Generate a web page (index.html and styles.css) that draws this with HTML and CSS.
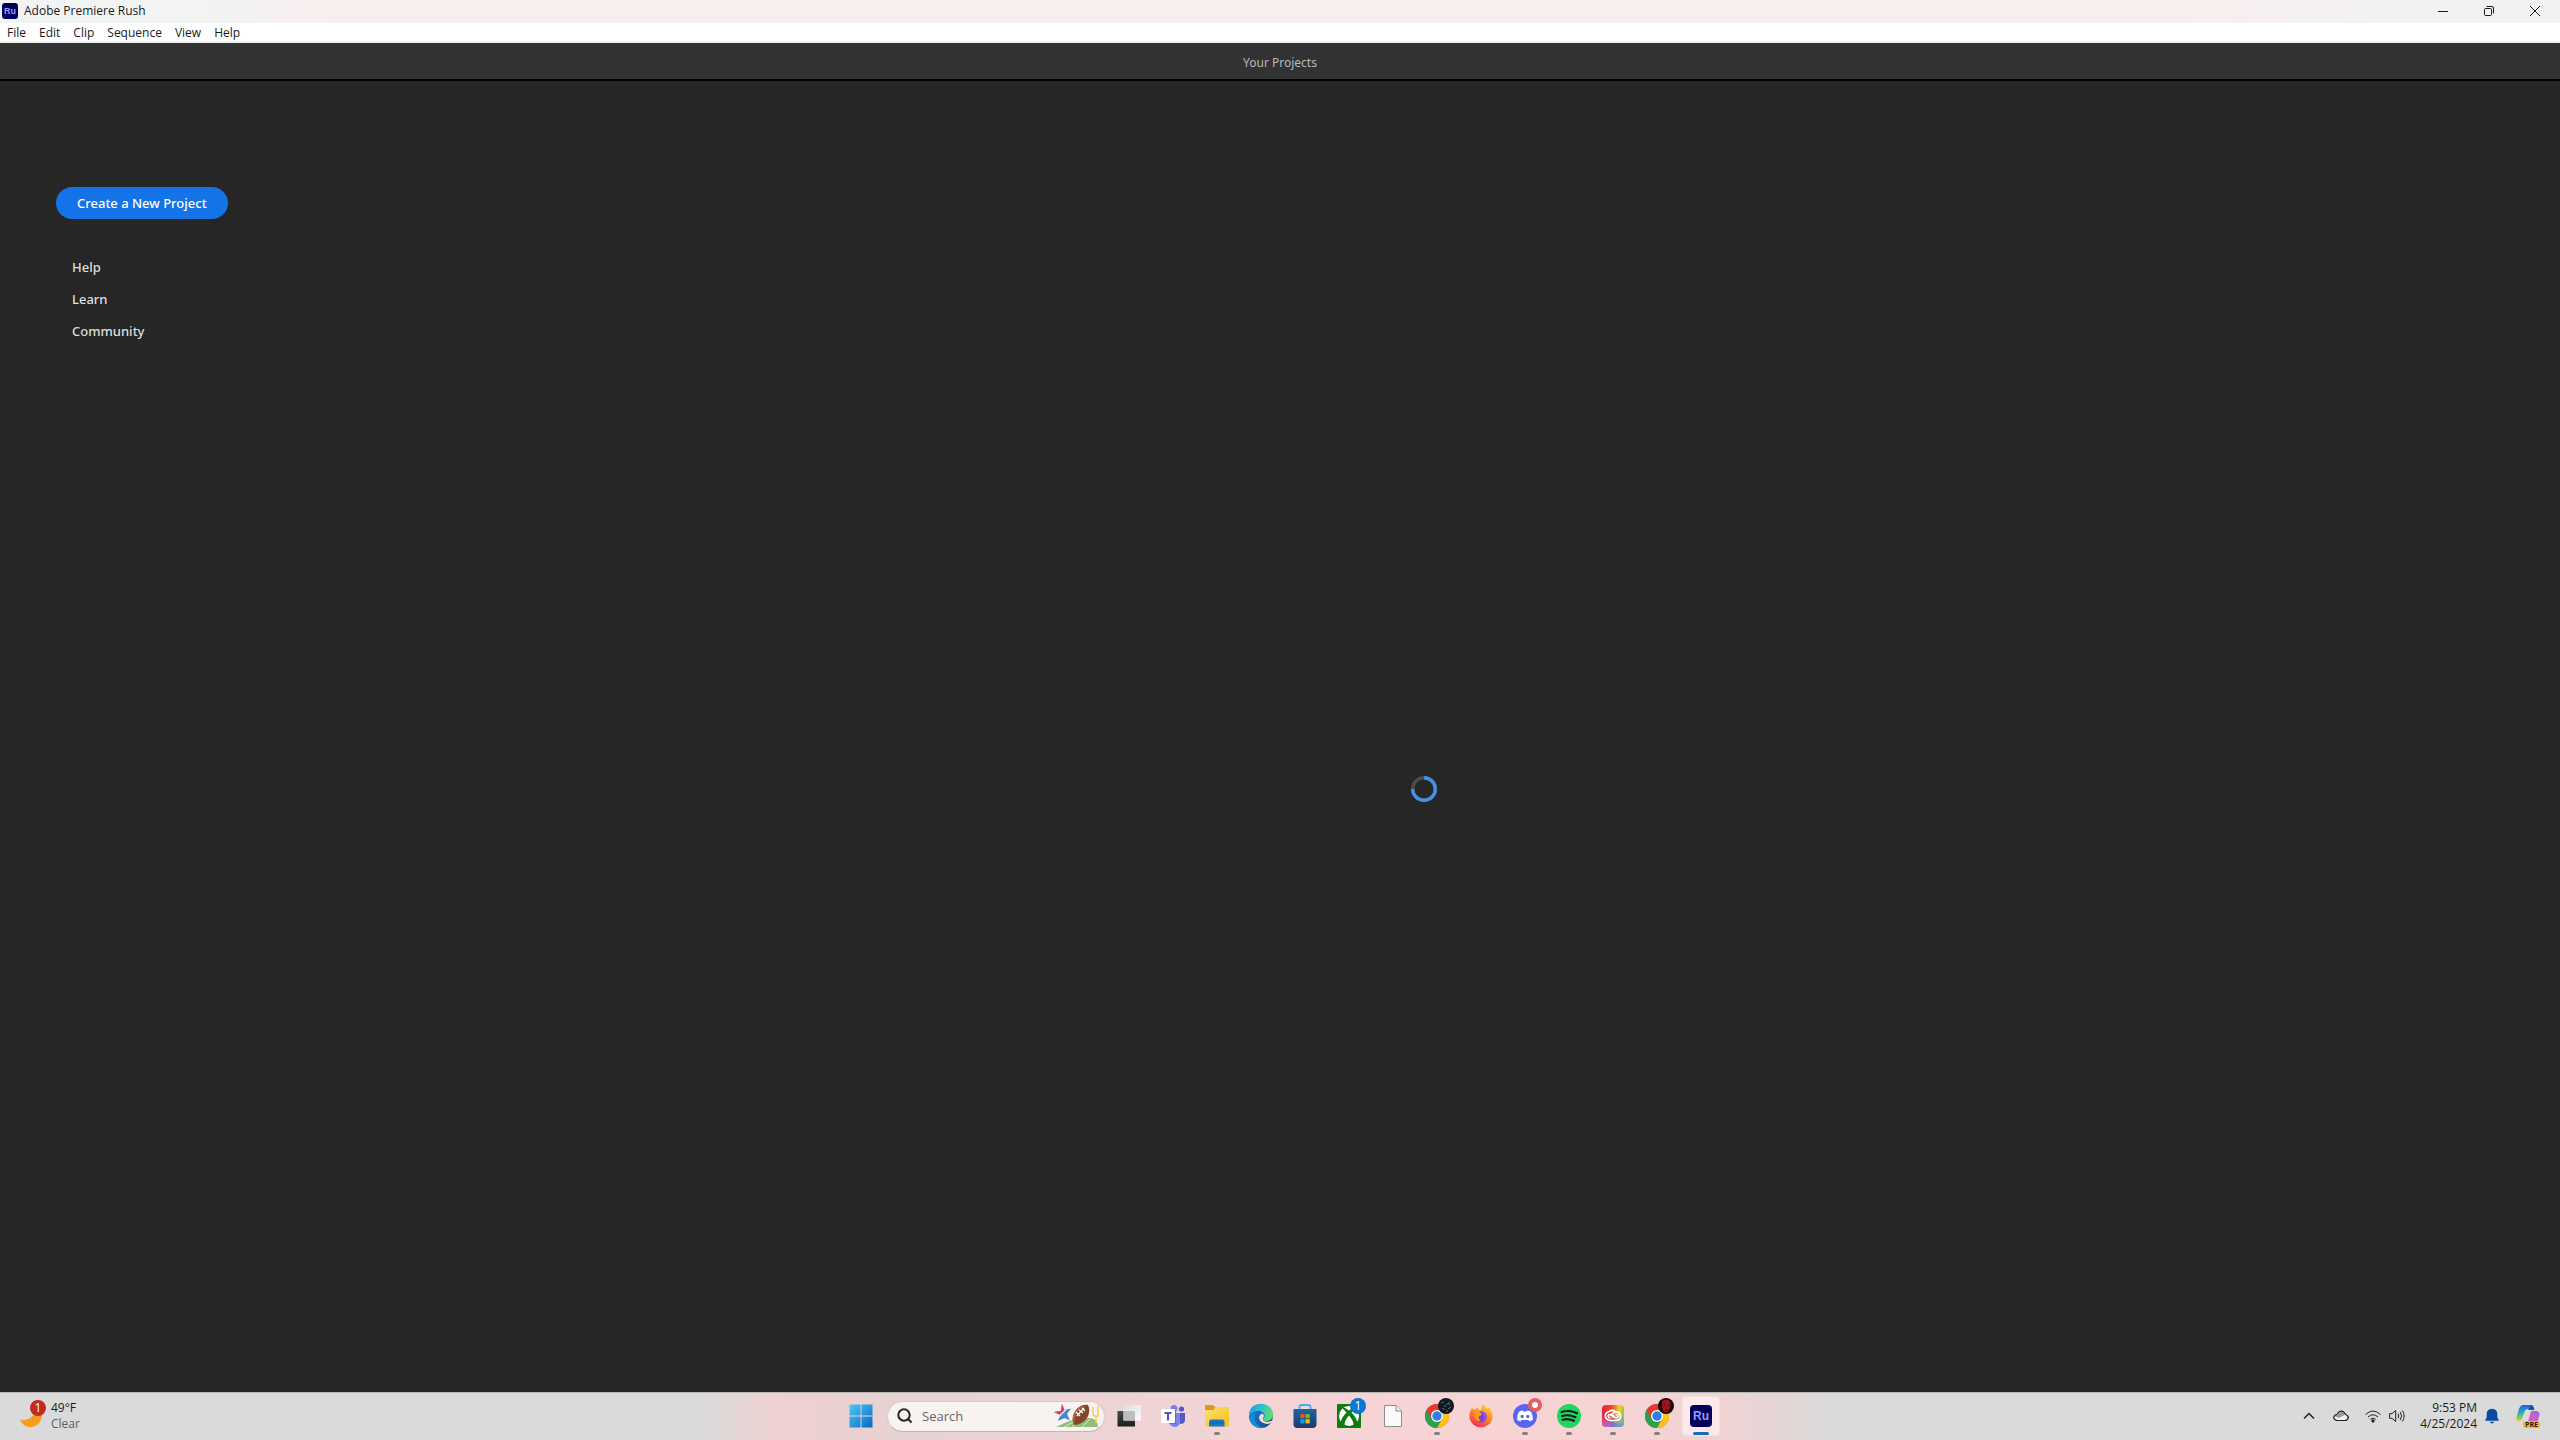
FILE: index.html
```html
<!DOCTYPE html>
<html lang="en">
<head>
<meta charset="utf-8">
<title>Adobe Premiere Rush</title>
<link rel="stylesheet" href="styles.css">
</head>
<body>
<svg class="defs" aria-hidden="true">
  <defs>
    <linearGradient id="win" x1="0" y1="0" x2="1" y2="1"><stop offset="0" stop-color="#4cc8f4"/><stop offset="1" stop-color="#0669c4"/></linearGradient>
    <linearGradient id="folder" x1="0" y1="0" x2="1" y2="1"><stop offset="0" stop-color="#ffe06d"/><stop offset="1" stop-color="#f6bd22"/></linearGradient>
    <linearGradient id="edgeTop" x1="0" y1="0.2" x2="1" y2="0.5"><stop offset="0" stop-color="#1b9fe0"/><stop offset="0.5" stop-color="#2fc3cc"/><stop offset="1" stop-color="#68dc62"/></linearGradient>
    <linearGradient id="edgeLow" x1="0" y1="0" x2="1" y2="1"><stop offset="0" stop-color="#1289da"/><stop offset="1" stop-color="#124b91"/></linearGradient>
    <linearGradient id="store" x1="0" y1="0" x2="0" y2="1"><stop offset="0" stop-color="#1767aa"/><stop offset="1" stop-color="#1f3866"/></linearGradient>
    <linearGradient id="dark" x1="0" y1="0" x2="0" y2="1"><stop offset="0" stop-color="#4a4a4a"/><stop offset="1" stop-color="#1c1c1c"/></linearGradient>
    <linearGradient id="pale" x1="0" y1="0" x2="1" y2="1"><stop offset="0" stop-color="#dedede"/><stop offset="1" stop-color="#fbfbfb"/></linearGradient>
    <linearGradient id="moon" x1="0" y1="0" x2="0" y2="1"><stop offset="0" stop-color="#e99a2b"/><stop offset="1" stop-color="#fb9f1e"/></linearGradient>
    <linearGradient id="fox" x1="0.8" y1="0" x2="0.3" y2="1"><stop offset="0" stop-color="#ffd83a"/><stop offset="0.5" stop-color="#ff8a22"/><stop offset="1" stop-color="#f0295d"/></linearGradient>
    <linearGradient id="ccWarm" x1="0" y1="0" x2="1" y2="0"><stop offset="0" stop-color="#e0243c"/><stop offset="0.45" stop-color="#f04a2a"/><stop offset="0.8" stop-color="#f4d22e"/><stop offset="1" stop-color="#7ccd4a"/></linearGradient>
    <linearGradient id="ccCool" x1="0" y1="0" x2="1" y2="0"><stop offset="0" stop-color="#d36bd8"/><stop offset="0.5" stop-color="#6a78ea"/><stop offset="1" stop-color="#38b4e0"/></linearGradient>
    <linearGradient id="fade" x1="0" y1="0" x2="0" y2="1"><stop offset="0.4" stop-color="#fff" stop-opacity="0"/><stop offset="1" stop-color="#fff"/></linearGradient>
    <mask id="lower"><rect width="24" height="24" fill="url(#fade)"/></mask>
    <linearGradient id="copA" x1="0" y1="0" x2="0" y2="1"><stop offset="0" stop-color="#2163d8"/><stop offset="0.45" stop-color="#27a7c8"/><stop offset="0.8" stop-color="#8cc957"/><stop offset="1" stop-color="#e6c92b"/></linearGradient>
    <linearGradient id="copB" x1="1" y1="0" x2="0" y2="1"><stop offset="0" stop-color="#a061ea"/><stop offset="0.6" stop-color="#db61b8"/><stop offset="1" stop-color="#f77e68"/></linearGradient>
    <symbol id="chrome" viewBox="0 0 24 24">
      <circle cx="12" cy="12" r="12" fill="#e33b2e"/>
      <path d="M1.6 6A12 12 0 0 0 12 24L17.2 15 12 12Z" fill="#2aa14b"/>
      <path d="M12 24A12 12 0 0 0 22.4 6H12V12L17.2 15Z" fill="#fbc116"/>
      <path d="M1.6 6A12 12 0 0 1 22.4 6H12L6.8 15Z" fill="#e33b2e"/>
      <circle cx="12" cy="12" r="6" fill="#fff"/><circle cx="12" cy="12" r="4.7" fill="#2f7de8"/>
    </symbol>
  </defs>
</svg>

<header class="titlebar">
  <span class="app-mark" aria-hidden="true">Ru</span>
  <h1 class="title">Adobe Premiere Rush</h1>
  <div class="window-controls">
    <button aria-label="Minimize"><svg viewBox="0 0 10 10"><path d="M0 5.5H10"/></svg></button>
    <button aria-label="Restore"><svg viewBox="0 0 10 10"><rect x="0.5" y="2.5" width="7" height="7" rx="1"/><path d="M2.5 0.5H8Q9.5 0.5 9.5 2V7.5"/></svg></button>
    <button aria-label="Close"><svg viewBox="0 0 10 10"><path d="M0 0L10 10M10 0L0 10"/></svg></button>
  </div>
</header>

<nav class="menubar" aria-label="Application menu">
  <button>File</button><button>Edit</button><button>Clip</button><button>Sequence</button><button>View</button><button>Help</button>
</nav>

<div class="pagehead"><h2>Your Projects</h2></div>

<main class="workspace">
  <aside class="sidebar">
    <button class="create">Create a New Project</button>
    <nav class="links" aria-label="Resources">
      <a href="#help">Help</a>
      <a href="#learn">Learn</a>
      <a href="#community">Community</a>
    </nav>
  </aside>
  <section class="projects" aria-label="Projects">
    <svg class="spinner" viewBox="0 0 26 26" role="img" aria-label="Loading">
      <circle cx="13" cy="13" r="11.3" fill="none" stroke="#4b4b4b" stroke-width="3.4"/>
      <path d="M13 1.7A11.3 11.3 0 1 1 1.7 13" fill="none" stroke="#4191e4" stroke-width="3.4"/>
    </svg>
  </section>
</main>

<footer class="taskbar">
  <button class="weather">
    <svg class="weather-icon" viewBox="0 0 26 28" aria-hidden="true">
      <path d="M0 19.5Q10 22 16 11L22 14.500Q22 21 17 25 12 28.500 6 26.300 1.500 24 0 19.500Z" fill="url(#moon)"/>
      <circle cx="18" cy="8" r="8" fill="#c42b1c"/>
      <text x="18" y="12" class="badge-text">1</text>
    </svg>
    <span class="stack"><span>49°F</span><span class="muted">Clear</span></span>
  </button>

  <div class="apps">
    <button class="app" aria-label="Start"><svg viewBox="0 0 24 24"><path fill="url(#win)" d="M0.500 0.500h11v11h-11zM12.500 0.500h11v11h-11zM0.500 12.500h11v11h-11zM12.500 12.500h11v11h-11z"/></svg></button>
    <label class="search">
      <svg class="lens" viewBox="0 0 16 16" aria-hidden="true"><circle cx="7" cy="7" r="5.700"/><path d="M11 11L14.500 14.500"/></svg>
      <input type="search" placeholder="Search" aria-label="Search">
      <svg class="doodle" viewBox="0 0 50 26" aria-hidden="true">
        <path d="M4 24Q22 14 38 15Q46 16 46 24Z" fill="#92bd78"/>
        <path d="M12 24L25 17M20 24L31 16M30 24L38 16" stroke="#dcebcf" stroke-width="1"/>
        <path d="M10 1L12.500 7 19 5.500 15 11 18 17.500 12.500 15 6 18 8.500 12 2 9 9 8Z" fill="#4189cf"/>
        <path d="M10 1L12.500 7 8.500 12 2 9 9 8Z" fill="#df3f57"/>
        <path d="M7.500 13L14 6.500" stroke="#f7f2f4" stroke-width="1.200"/>
        <path d="M41 4V11Q41 13 43 13H46V3M44 13V20" fill="none" stroke="#eecb5d" stroke-width="1.500"/>
        <path d="M36 2Q39 8 35 15 30 22 22 22 19 14 24 7 29 1 36 2Z" fill="#85452c"/>
        <path d="M34 3Q27 5 24 12 22 17 22 22 18 15 24 7 28 2 34 3Z" fill="#a96440"/>
        <path d="M25 13L32 5M24 9L28 13M27 7L31 10M30 5L33 8" stroke="#fff" stroke-width="1.200"/>
      </svg>
    </label>
    <button class="app" aria-label="Task View"><svg viewBox="0 0 24 24"><rect x="0.500" y="7" width="17.500" height="15.500" fill="url(#dark)"/><rect x="6.500" y="1" width="17.500" height="15.500" fill="url(#pale)"/><path d="M6.500 7H18V16.500H6.500Z" fill="#bdbdbd"/></svg></button>
    <button class="app" aria-label="Teams"><svg viewBox="0 0 24 24"><circle cx="13" cy="4.500" r="3.500" fill="#7b83eb"/><circle cx="20.500" cy="5" r="2.600" fill="#5059c9"/><path d="M18 9H24V16Q24 20 19 20Z" fill="#5059c9"/><path d="M9 9H19V17Q19 23 13.500 23 9 22.500 8 18Z" fill="#7b83eb"/><path d="M5 6H15V20H8Z" fill="#4b53bc" opacity=".55"/><rect x="0" y="5" width="14" height="14" rx="1" fill="#fff"/><path d="M3.500 8H10.500V10H8.100V16.500H5.900V10H3.500Z" fill="#5558af"/></svg></button>
    <button class="app running" aria-label="File Explorer"><svg viewBox="0 0 24 24"><path d="M0 2Q0 1 1 1H8L11 4V8H0Z" fill="#d89a1b"/><path d="M0 6H8L11 3H23Q24 3 24 4V21Q24 22.500 22.500 22.500H1.500Q0 22.500 0 21Z" fill="url(#folder)"/><path d="M4 22.500V18Q4 15.500 6.500 15.500H17Q19.500 15.500 19.500 18V22.500Z" fill="#1677c7"/><path d="M6 19H17.500" stroke="#0b60a5"/></svg></button>
    <button class="app" aria-label="Edge"><svg viewBox="0 0 24 24"><circle cx="12" cy="12" r="12" fill="url(#edgeLow)"/><path d="M0 11Q1 0 12 0 23 0.500 24 10 24 16 18 17 14 17.500 14 15 16 13 15.500 10.500 13 6 7.500 7 2 8 0 13Z" fill="url(#edgeTop)"/><path d="M14 14Q13 17.500 18 17.700 21 17.700 23.500 16.500 22 20 17.500 20 10.500 18.500 10 14 10 11 13 9.500 16.500 11 14 14Z" fill="#f5d9dc"/><path d="M6 10Q3 19 13 23.900 4 24 1 17 0 13 3 10Z" fill="#168bd9"/></svg></button>
    <button class="app" aria-label="Microsoft Store"><svg viewBox="0 0 24 24"><path d="M6.500 7V3Q6.500 1 8.500 1H15.500Q17.500 1 17.500 3V7" fill="none" stroke="#33b6e5" stroke-width="1.800"/><path d="M0.500 5H23.500V20Q23.500 24 19.500 24H4.500Q0.500 24 0.500 20Z" fill="url(#store)"/><path d="M7.300 10h4.200v4.200H7.300z" fill="#f25022"/><path d="M12.500 10h4.200v4.200h-4.200z" fill="#7fba00"/><path d="M7.300 15.200h4.200v4.200H7.300z" fill="#00a4ef"/><path d="M12.500 15.200h4.200v4.200h-4.200z" fill="#ffb900"/></svg></button>
    <button class="app" aria-label="Xbox"><svg viewBox="0 0 24 24"><rect width="24" height="24" rx="1" fill="#107c10"/><circle cx="12" cy="12" r="10" fill="#fff"/><path d="M5 3.500Q8 3 12 6.500 16 3 19 3.500 17 6 14.500 8.500 20 14 20.500 19.500 18 23 16.500 22 17 17 12 11.500 7 17 7.500 22 5 22 3.500 19 4 14 9.500 8.500 7 6 5 3.500Z" fill="#107c10"/></svg><span class="badge blue">1</span></button>
    <button class="app" aria-label="Document"><svg viewBox="0 0 24 24"><path d="M3.500 1.500H15L20.500 7V22.500H3.500Z" fill="#fafafa" stroke="#8c8c8c"/><path d="M15 1.500V7H20.500" fill="#eee" stroke="#8c8c8c"/></svg></button>
    <button class="app running" aria-label="Chrome"><svg><use href="#chrome"/></svg><span class="badge"><svg viewBox="0 0 16 16"><circle cx="8" cy="8" r="8" fill="#101923"/><path d="M3 5L6 4M8 7L12 4M4 10L7 12M10 11L13 9" stroke="#49717c"/><path d="M6 8H8M10 5L12 7M8 13H10" stroke="#a85f69"/></svg></span></button>
    <button class="app" aria-label="Firefox"><svg viewBox="0 0 24 24"><path d="M3 4Q4 6 6 5.500 8 3 9 4 9 6 12 6 12 2 15 0 16 4 19 5L20 3Q24 8 23.500 14 22 22 13 23.500 3 23.500 0.500 14 0 8 3 4Z" fill="url(#fox)"/><circle cx="12" cy="13" r="5.500" fill="#7c43d2"/><path d="M5 8Q8 6 12 9 14 11 10 12 9 15 12 17 7 18 5.500 13Z" fill="#ff9626"/><path d="M12 7Q18 8 18 13 17 18 13 18.500 16 15 15 12 14 9 12 7Z" fill="#9555dc"/></svg></button>
    <button class="app running" aria-label="Discord"><svg viewBox="0 0 24 24"><circle cx="12" cy="12" r="12" fill="#5865f2"/><path d="M8 6.800L10 6.500 10.500 7.500H13.500L14 6.500 16 6.800 18.200 8Q20.300 12 19.800 16L16.500 17.600 15.500 16H8.500L7.500 17.600 4.200 16Q3.700 12 5.800 8Z" fill="#fff"/><ellipse cx="9.200" cy="12.500" rx="1.600" ry="1.800" fill="#5865f2"/><ellipse cx="14.800" cy="12.500" rx="1.600" ry="1.800" fill="#5865f2"/></svg><span class="badge coral"><i></i></span></button>
    <button class="app running" aria-label="Spotify"><svg viewBox="0 0 24 24"><circle cx="12" cy="12" r="12" fill="#1ed760"/><path d="M4.500 8Q12.500 5.500 20 9.200M5 12Q12 10 18.500 13.200M5.600 15.700Q11.500 14 17 16.800" fill="none" stroke="#10201a" stroke-width="2.200" stroke-linecap="round"/></svg></button>
    <button class="app running" aria-label="Creative Cloud"><svg viewBox="0 0 24 24"><rect x="1" y="1" width="22" height="22" rx="4" fill="url(#ccWarm)"/><g mask="url(#lower)"><rect x="1" y="1" width="22" height="22" rx="4" fill="url(#ccCool)"/></g><path d="M15 8.500Q12 4.800 8 7.500 3.500 9 4.500 13 6 16.500 10 16.500H15Q20 16 19.500 11.500 18 7 14 8 11 9 9.500 12" fill="none" stroke="#fff" stroke-width="1.700"/><path d="M12.500 13.500L9.500 10.500Q7.500 10 7 12 7.500 14 9.500 14M11.500 10.500L14 13.500Q16.500 14.500 17 12 16.500 10 14.500 10.500" fill="none" stroke="#fff" stroke-width="1.500"/></svg></button>
    <button class="app running" aria-label="Chrome, second profile"><svg><use href="#chrome"/></svg><span class="badge"><svg viewBox="0 0 16 16"><circle cx="8" cy="8" r="8" fill="#160607"/><path d="M4 3Q8 0 12 3L12.500 8Q11 14 8 14.500 5 14 4 9Z" fill="#a70f17"/><path d="M6 7H7.500M10 7H11.500M7 12H9.500" stroke="#3c0509"/></svg></span></button>
    <button class="app active" aria-label="Premiere Rush"><span class="rush" aria-hidden="true">Ru</span></button>
  </div>

  <div class="tray">
    <button class="tray-icon chevron" aria-label="Show hidden icons"><svg viewBox="0 0 16 16"><path d="M3 10.500L8 5.500 13 10.500" stroke-width="1.500"/></svg></button>
    <button class="tray-icon cloud" aria-label="OneDrive"><svg viewBox="0 0 16 16"><path d="M4 12.500Q0.700 12 0.700 9.500 1 6.500 4 6.500 5 3 8.500 3 11.500 3.200 12.500 6.500 15.500 7 15.300 10 15 12.500 12 12.500Z" fill="#f2f2f2"/><path d="M1.500 8Q2 6.500 4 6.500 5 3 8.500 3 11.500 3.200 12.500 6.500L6 10Z" fill="#999" stroke="none"/><path d="M4 12.500Q0.700 12 0.700 9.500 1 6.500 4 6.500 5 3 8.500 3 11.500 3.200 12.500 6.500 15.500 7 15.300 10 15 12.500 12 12.500Z"/></svg></button>
    <button class="tray-icon network" aria-label="Network"><svg viewBox="0 0 16 16"><path d="M0.500 6.500Q8-0.500 15.500 6.500M3 9Q8 4.500 13 9M5.300 11.300Q8 9 10.700 11.300"/><circle cx="8" cy="13" r="1.200" fill="#222"/></svg></button>
    <button class="tray-icon" aria-label="Volume"><svg viewBox="0 0 16 16"><path d="M0.600 5.700H3L6.700 2.500V13.500L3 10.300H0.600ZM9 5.700Q10.500 8 9 10.300M11.200 4Q14 8 11.200 12M13.300 2.500Q17 8 13.300 13.500"/></svg></button>
    <button class="clock"><time class="stack" datetime="2024-04-25T21:53"><span>9:53 PM</span><span>4/25/2024</span></time></button>
    <button class="tray-icon bell" aria-label="Notifications"><svg viewBox="0 0 16 16"><path d="M8 0.700Q13.300 1 13.300 6V9.500L14.800 12V12.800H1.200V12L2.700 9.500V6Q2.700 1 8 0.700ZM5.800 13.800H10.200Q9.500 15.600 8 15.600T5.800 13.800Z" fill="#0b4aa0" stroke="none"/></svg></button>
    <button class="copilot" aria-label="Copilot preview"><svg viewBox="0 0 24 24"><path d="M7 1H15Q17 1 18 5H12Q9 5 8 9L6 15Q5 17 2 17 0 16 0.500 13L3 5Q4.500 1 7 1Z" fill="url(#copA)"/><path d="M15 1Q17.500 1 18.500 6H12Z" fill="#1850b4"/><path d="M16 7H21Q24 8 23.500 11L21.500 18Q20 22 16 22H8Q11 21 12 18L14 10Q14.500 7 16 7Z" fill="url(#copB)"/></svg><span>PRE</span></button>
  </div>
</footer>
</body>
</html>
```

FILE: styles.css
```css
* { box-sizing: border-box; }

body {
  margin: 0;
  min-height: 100vh;
  display: flex;
  flex-direction: column;
  background: #262626;
  color: #1b1b1b;
  font: 12px/16px "Open Sans", "Noto Sans", sans-serif;
}

button {
  margin: 0;
  padding: 0;
  border: 0;
  background: none;
  color: inherit;
  font: inherit;
}

h1, h2 { margin: 0; font-size: inherit; font-weight: 400; }
svg { display: block; }
.defs { position: absolute; width: 0; height: 0; }

/* Window chrome */
.titlebar {
  display: flex;
  align-items: center;
  height: 23px;
  padding: 0 2px 1px;
  background: linear-gradient(90deg, #f2f3f3 8%, #f9eeee 13%, #f9eeee 85%, #f2f2f2 94%);
}

.app-mark {
  width: 16px;
  height: 16px;
  margin-right: 6px;
  border-radius: 3px;
  background: #00005b;
  color: #9999ff;
  font: bold 9px/16px "Liberation Sans", sans-serif;
  text-align: center;
}

.window-controls { display: flex; margin-left: auto; }
.window-controls button {
  width: 46px;
  height: 20px;
  display: grid;
  place-items: center;
}
.window-controls svg {
  width: 10px;
  height: 10px;
  fill: none;
  stroke: #1a1a1a;
  overflow: visible;
}

.menubar {
  display: flex;
  gap: 13px;
  height: 20px;
  padding: 1px 7px 0;
  background: #fff;
  border-bottom: 2px solid #f0f0f0;
}

.pagehead {
  height: 38px;
  border-bottom: 2px solid #000;
  background: #323232;
  color: #b9b9b9;
  font-family: "Noto Sans", sans-serif;
  line-height: 40px;
  text-align: center;
}

/* Workspace */
.workspace { flex: 1; display: flex; padding: 106px 0 2px; }

.sidebar {
  width: 288px;
  padding-left: 56px;
  color: #dedede;
  font: 500 13px/32px "Noto Sans", sans-serif;
}

.create {
  display: block;
  height: 32px;
  padding: 0 21px;
  border-radius: 16px;
  background: #1473e6;
  color: #fff;
}

.links {
  display: flex;
  flex-direction: column;
  align-items: flex-start;
  padding: 32px 16px 0;
}
.links a { color: inherit; text-decoration: none; }

.projects { flex: 1; display: grid; place-items: center; }
.spinner { width: 26px; height: 26px; }

/* Taskbar */
.taskbar {
  display: grid;
  grid-template-columns: 1fr auto 1fr;
  align-items: center;
  height: 48px;
  padding-left: 2px;
  box-shadow: inset 0 1px #b8b5b5;
  background: linear-gradient(90deg, #dadada 27.500%, #f0d0d0 30.500%, #e6d2d2 35%, #edd3d4 42%, #f5d3d4 50%, #f8d3d4 62%, #f2d2d3 67%, #dadada 71.500%);
}

.stack { display: flex; flex-direction: column; }
.muted { color: #5c5c5c; }

.weather {
  display: flex;
  gap: 5px;
  justify-self: start;
  padding-left: 18px;
  text-align: left;
}
.weather-icon { width: 26px; height: 28px; }
.badge-text { fill: #fff; font-size: 12px; text-anchor: middle; }

.apps { display: flex; align-items: center; }

.app {
  position: relative;
  display: grid;
  place-items: center;
  width: 44px;
  height: 40px;
}
.app > svg { width: 24px; height: 24px; }

.running::after,
.active::after {
  content: "";
  position: absolute;
  bottom: 1px;
  left: 19px;
  width: 6px;
  height: 3px;
  border-radius: 2px;
  background: #8c7d7d;
}
.active::after { left: 14px; width: 16px; background: #1670b8; }
.active::before {
  content: "";
  position: absolute;
  inset: 0 3px;
  border: 1px solid #f2dfe0;
  border-radius: 4px;
  background: #fbe9eb;
}

.rush {
  position: relative;
  width: 22px;
  height: 22px;
  border-radius: 4px;
  background: #00005b;
  color: #9999ff;
  font: bold 12px/22px "Liberation Sans", sans-serif;
}

.badge {
  position: absolute;
  top: 2px;
  right: 5px;
  width: 16px;
  height: 16px;
  border-radius: 50%;
  color: #fff;
}
.blue { background: #0878d4; }
.coral { display: grid; place-items: center; width: 14px; height: 14px; background: #e35d63; }
.coral i { width: 6px; height: 6px; border-radius: 50%; background: #fff; }

.search {
  display: flex;
  align-items: center;
  width: 218px;
  height: 31px;
  margin: 0 2px 0 4px;
  padding: 0 2px 0 9px;
  border: 1px solid #ddc9ca;
  border-bottom-color: #c4b4b5;
  border-radius: 16px;
  background: #f8f2f1;
}
.lens { width: 16px; height: 16px; fill: none; stroke: #252525; stroke-width: 2; }
.search input {
  flex: 1;
  min-width: 0;
  margin: 0 0 0 9px;
  padding: 0;
  border: 0;
  outline: 0;
  background: none;
  font: 13px/20px "Open Sans", sans-serif;
}
.search input::placeholder { color: #666; opacity: 1; }
.doodle { width: 50px; height: 26px; }

.tray { display: flex; align-items: center; justify-self: end; padding-right: 20px; }
.tray-icon svg { width: 16px; height: 16px; fill: none; stroke: #222; overflow: visible; }
.chevron { margin-right: 16px; }
.cloud { margin-right: 16px; }
.network { margin-right: 8px; }
.clock { width: 72px; text-align: right; }
.bell { margin: 0 16px 0 7px; }

.copilot { position: relative; }
.copilot svg { width: 24px; height: 24px; }
.copilot span {
  position: absolute;
  right: 0;
  bottom: 0;
  padding: 0 2px;
  border-radius: 2px;
  background: #fcb813;
  color: #1b1b1b;
  font: bold 7px/7px "Open Sans", sans-serif;
}
```
